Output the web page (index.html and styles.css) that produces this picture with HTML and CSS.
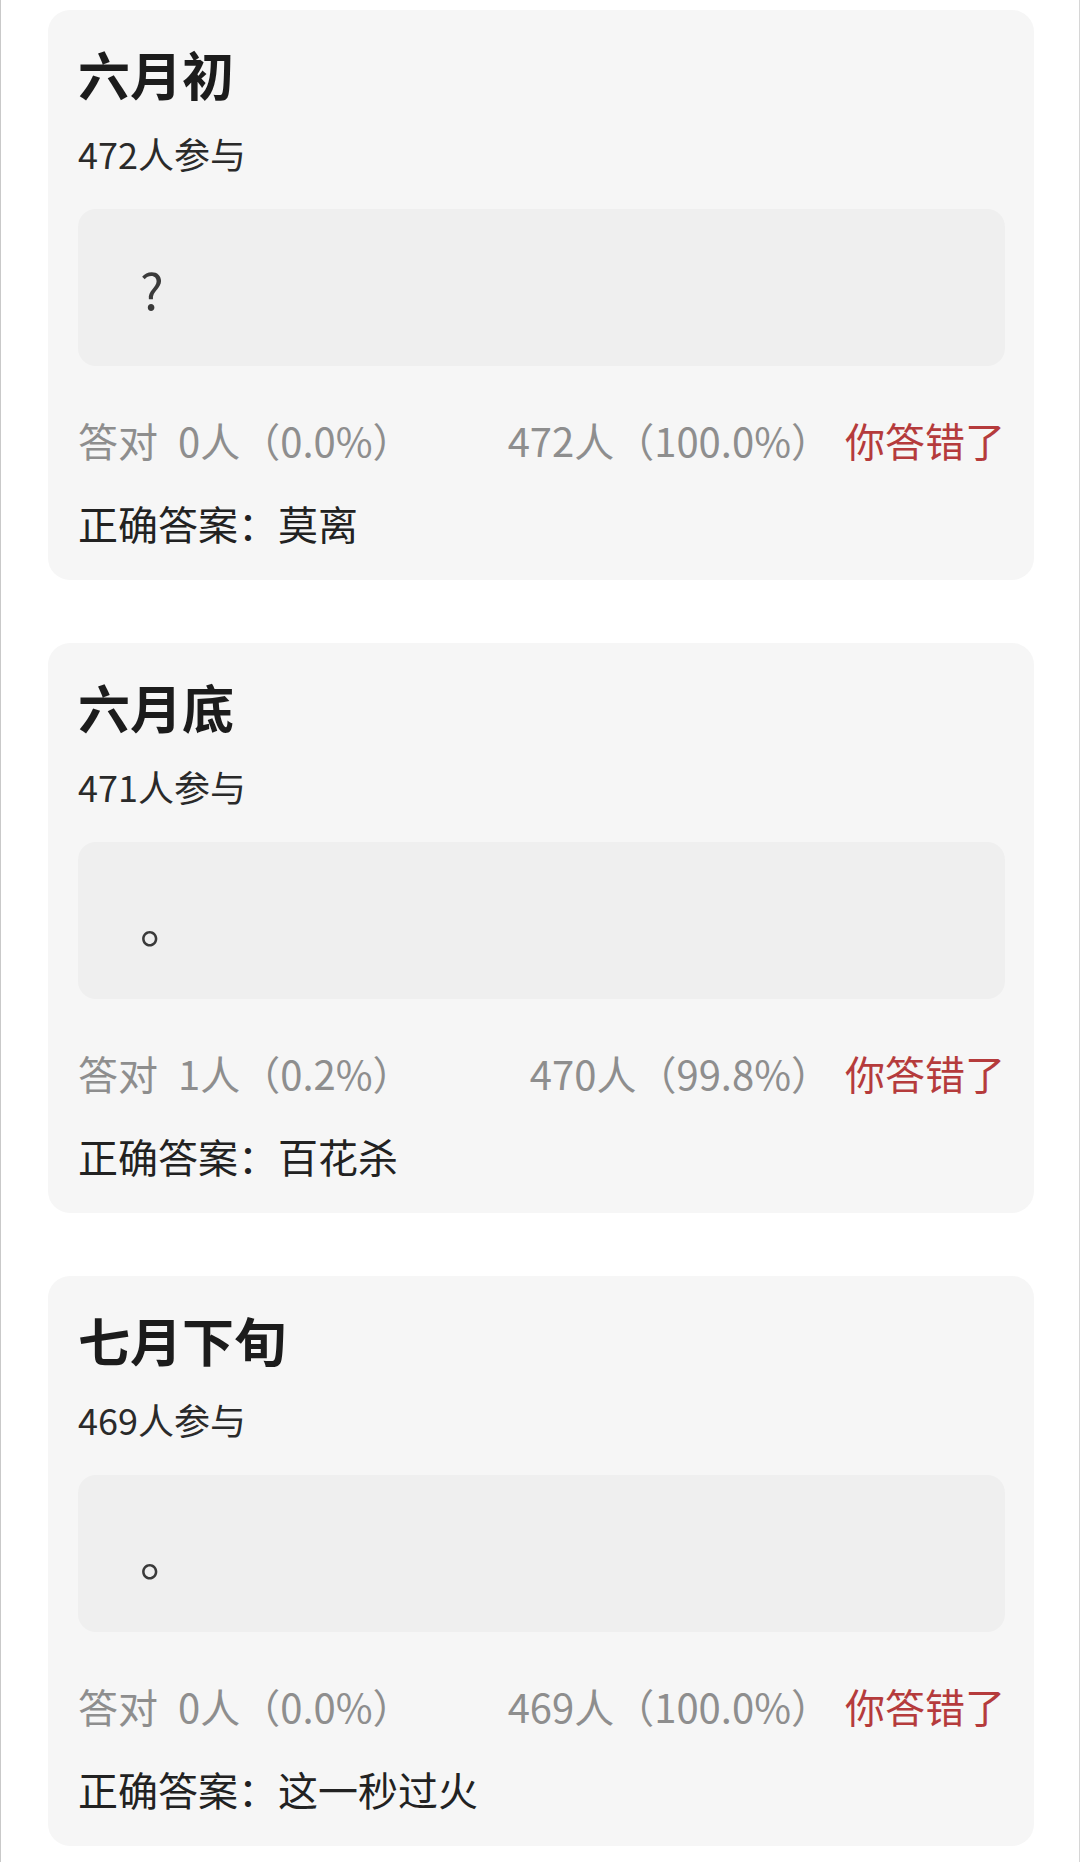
FILE: index.html
```html
<!DOCTYPE html>
<html lang="zh-CN">

<head>
    <meta charset="UTF-8">
    <meta name="viewport" content="width=device-width, initial-scale=1.0">
    <title>竞猜结果</title>
    <link rel="stylesheet" href="styles.css">
</head>

<body>
    <div class="page">
        <div class="card">
            <div class="title">六月初</div>
            <div class="count">472人参与</div>
            <div class="answer-box"><span class="mark">?</span></div>
            <div class="stats">
                <span class="right"><span class="label">答对</span>0人（0.0%）</span>
                <span class="wrong">472人（100.0%）</span>
                <span class="verdict">你答错了</span>
            </div>
            <div class="correct">正确答案：莫离</div>
        </div>

        <div class="card">
            <div class="title">六月底</div>
            <div class="count">471人参与</div>
            <div class="answer-box"><span class="mark">。</span></div>
            <div class="stats">
                <span class="right"><span class="label">答对</span>1人（0.2%）</span>
                <span class="wrong">470人（99.8%）</span>
                <span class="verdict">你答错了</span>
            </div>
            <div class="correct">正确答案：百花杀</div>
        </div>

        <div class="card">
            <div class="title">七月下旬</div>
            <div class="count">469人参与</div>
            <div class="answer-box"><span class="mark">。</span></div>
            <div class="stats">
                <span class="right"><span class="label">答对</span>0人（0.0%）</span>
                <span class="wrong">469人（100.0%）</span>
                <span class="verdict">你答错了</span>
            </div>
            <div class="correct">正确答案：这一秒过火</div>
        </div>
    </div>
</body>

</html>
```

FILE: styles.css
```css
body {
    margin: 0;
    padding: 0;
    background-color: #ffffff;
    font-family: "Noto Sans CJK SC", "Noto Sans", sans-serif;
}

.page {
    height: 1862px;
    box-sizing: border-box;
    border-left: 1px solid #c9c9c9;
    border-right: 1px solid #d6d6d6;
    padding: 10px 45px 0 47px;
    display: flex;
    flex-direction: column;
    gap: 63px;
}

.card {
    height: 570px;
    box-sizing: border-box;
    background-color: #f6f6f6;
    border-radius: 22px;
    padding: 34px 29px 0 30px;
    display: flex;
    flex-direction: column;
}

.title {
    font-size: 52px;
    font-weight: 700;
    line-height: 60px;
    color: #1c1c1c;
}

.count {
    margin-top: 27px;
    font-size: 36px;
    line-height: 44px;
    color: #2a2a2a;
}

.answer-box {
    margin-top: 34px;
    height: 157px;
    background-color: #efefef;
    border-radius: 18px;
    display: flex;
    align-items: center;
    padding-left: 62px;
}

.mark {
    font-size: 50px;
    line-height: 60px;
    color: #3a3a3a;
}

.stats {
    margin-top: 49px;
    display: flex;
    align-items: center;
    font-size: 40px;
    line-height: 50px;
    color: #8e8e8e;
}

.right {
    flex: 1;
}

.label {
    margin-right: 20px;
}

.verdict {
    margin-left: 14px;
    color: #b53b3c;
}

.correct {
    margin-top: 33px;
    font-size: 40px;
    line-height: 50px;
    color: #222222;
}
```
